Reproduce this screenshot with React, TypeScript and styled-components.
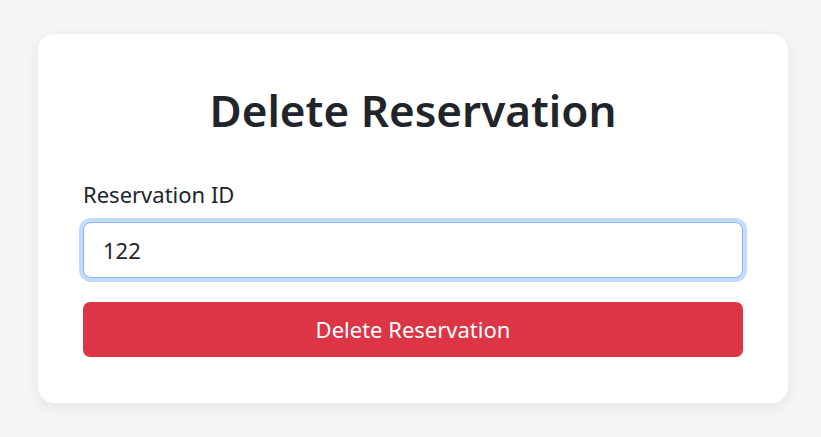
import React, { useState } from "react";
import styled, { createGlobalStyle } from "styled-components";

const GlobalStyle = createGlobalStyle`
  * { box-sizing: border-box; }
  body {
    margin: 0;
    background: #f4f5f7;
    font-family: "Noto Sans", "Open Sans", sans-serif;
    color: #212529;
  }
`;

const Page = styled.div`
  min-height: 437px;
  padding: 34px 0 0 38px;
`;

const Card = styled.div`
  width: 750px;
  background: #fff;
  border-radius: 16px;
  box-shadow: 0 4px 14px rgba(0, 0, 0, 0.07);
  padding: 50px 45px 46px;
  display: flex;
  flex-direction: column;
`;

const Title = styled.h1`
  margin: 0 0 41px;
  text-align: center;
  font-size: 44px;
  font-weight: 600;
  line-height: 1.2;
`;

const Label = styled.label`
  font-size: 22px;
  line-height: 1.5;
  margin-bottom: 11px;
`;

const Input = styled.input`
  height: 56px;
  width: 100%;
  padding: 0 19px;
  font-family: inherit;
  font-size: 22px;
  color: #212529;
  border: 1px solid #86b7fe;
  border-radius: 8px;
  outline: none;
  box-shadow: 0 0 0 4px rgba(13, 110, 253, 0.25);
  margin-bottom: 24px;
`;

const DangerButton = styled.button`
  height: 55px;
  width: 100%;
  border: none;
  border-radius: 7px;
  background: #dc3545;
  color: #fff;
  font-family: inherit;
  font-size: 22px;
  cursor: pointer;
`;

export default function App() {
  const [id, setId] = useState("122");
  return (
    <>
      <GlobalStyle />
      <Page>
        <Card>
          <Title>Delete Reservation</Title>
          <Label htmlFor="rid">Reservation ID</Label>
          <Input id="rid" value={id} onChange={(e) => setId(e.target.value)} />
          <DangerButton>Delete Reservation</DangerButton>
        </Card>
      </Page>
    </>
  );
}
